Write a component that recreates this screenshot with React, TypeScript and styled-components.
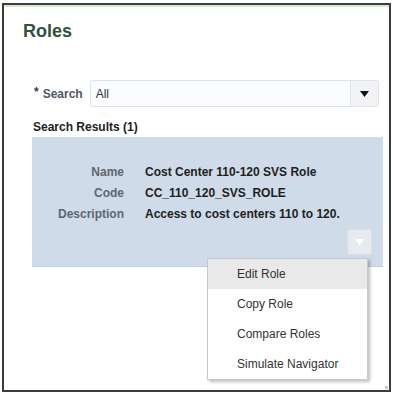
import styled, { createGlobalStyle } from 'styled-components';
import React from 'react';

const GlobalStyle = createGlobalStyle`
  html, body {
    margin: 0;
    padding: 0;
    background: #ffffff;
  }
  body {
    font-family: "Liberation Sans", Arial, sans-serif;
  }
`;

const Frame = styled.div`
  position: relative;
  box-sizing: border-box;
  margin: 3px 0 0 2px;
  width: 389px;
  height: 389px;
  border: 2px solid #3c3c3c;
  box-shadow: inset 0 2px 0 #d6ecc8;
  background: #fff;
`;

const Title = styled.h1`
  margin: 15px 0 0 19px;
  font-size: 18px;
  line-height: 22px;
  font-weight: bold;
  color: #34513c;
`;

const SearchRow = styled.div`
  display: flex;
  align-items: center;
  margin-top: 38px;
  padding-left: 30px;
  height: 27px;
`;

const SearchLabel = styled.label`
  font-size: 12px;
  font-weight: bold;
  color: #4c5866;
  margin-right: 7px;
  white-space: nowrap;
`;

const Required = styled.span`
  color: #1f3f6a;
  font-size: 12px;
  margin-right: 4px;
  position: relative;
  top: -2px;
`;

const Select = styled.div`
  box-sizing: border-box;
  display: flex;
  width: 289px;
  height: 27px;
  border: 1px solid #dde3e8;
  border-radius: 2px;
  background: #fbfcfd;
`;

const SelectValue = styled.div`
  flex: 1;
  display: flex;
  align-items: center;
  padding-left: 5px;
  font-size: 12px;
  color: #333;
`;

const SelectButton = styled.div`
  width: 27px;
  display: flex;
  align-items: center;
  justify-content: center;
  border-left: 1px solid #dde3e8;
  background: #f1f3f5;
`;

const ResultsTitle = styled.div`
  margin: 13px 0 0 29px;
  font-size: 12px;
  line-height: 15px;
  font-weight: bold;
  color: #222;
`;

const Panel = styled.div`
  position: relative;
  box-sizing: border-box;
  margin: 2px 0 0 28px;
  width: 351px;
  height: 130px;
  padding-top: 25px;
  background: #cfdbe9;
  border-bottom: 1px solid #c4d0dd;
`;

const Details = styled.div`
  display: grid;
  grid-template-columns: 92px 1fr;
  column-gap: 21px;
`;

const Label = styled.div`
  text-align: right;
  font-size: 12px;
  line-height: 21px;
  font-weight: bold;
  color: #5e6670;
`;

const Value = styled.div`
  font-size: 12px;
  line-height: 21px;
  font-weight: bold;
  color: #1e1e1e;
  white-space: nowrap;
`;

const ActionButton = styled.div`
  position: absolute;
  right: 11px;
  top: 92px;
  width: 25px;
  height: 26px;
  box-sizing: border-box;
  border: 1px solid #d7dee6;
  border-radius: 2px;
  background: #e6ebf0;
  display: flex;
  align-items: center;
  justify-content: center;
`;

const Menu = styled.ul`
  position: absolute;
  left: 175px;
  top: 121px;
  box-sizing: border-box;
  width: 161px;
  height: 122px;
  margin: 0;
  padding: 0;
  list-style: none;
  background: #fff;
  border: 1px solid #c9c9c9;
  box-shadow: 2px 2px 3px rgba(0, 0, 0, 0.25);
  z-index: 2;
`;

const MenuItem = styled.li<{ $active?: boolean }>`
  height: 30px;
  display: flex;
  align-items: center;
  padding-left: 29px;
  font-size: 12px;
  color: #333;
  background: ${(p) => (p.$active ? '#e9e9e9' : 'transparent')};
`;

const Grip = styled.div`
  position: absolute;
  right: 1px;
  bottom: 1px;
  width: 3px;
  height: 3px;
  background: #c8c8c8;
`;

const Caret = ({ color }: { color: string }) => (
  <svg width="9" height="6" viewBox="0 0 9 6">
    <path d="M0 0 H9 L4.5 6 Z" fill={color} />
  </svg>
);

const details = [
  { label: 'Name', value: 'Cost Center 110-120 SVS Role' },
  { label: 'Code', value: 'CC_110_120_SVS_ROLE' },
  { label: 'Description', value: 'Access to cost centers 110 to 120.' },
];

const menuItems = ['Edit Role', 'Copy Role', 'Compare Roles', 'Simulate Navigator'];

const App: React.FC = () => {
  return (
    <>
      <GlobalStyle />
      <Frame>
        <Title>Roles</Title>
        <SearchRow>
          <SearchLabel>
            <Required>*</Required>Search
          </SearchLabel>
          <Select>
            <SelectValue>All</SelectValue>
            <SelectButton>
              <Caret color="#111" />
            </SelectButton>
          </Select>
        </SearchRow>
        <ResultsTitle>Search Results (1)</ResultsTitle>
        <Panel>
          <Details>
            {details.map((d) => (
              <React.Fragment key={d.label}>
                <Label>{d.label}</Label>
                <Value>{d.value}</Value>
              </React.Fragment>
            ))}
          </Details>
          <ActionButton>
            <Caret color="#ffffff" />
          </ActionButton>
          <Menu>
            {menuItems.map((item, i) => (
              <MenuItem key={item} $active={i === 0}>
                {item}
              </MenuItem>
            ))}
          </Menu>
        </Panel>
        <Grip />
      </Frame>
    </>
  );
};

export default App;
